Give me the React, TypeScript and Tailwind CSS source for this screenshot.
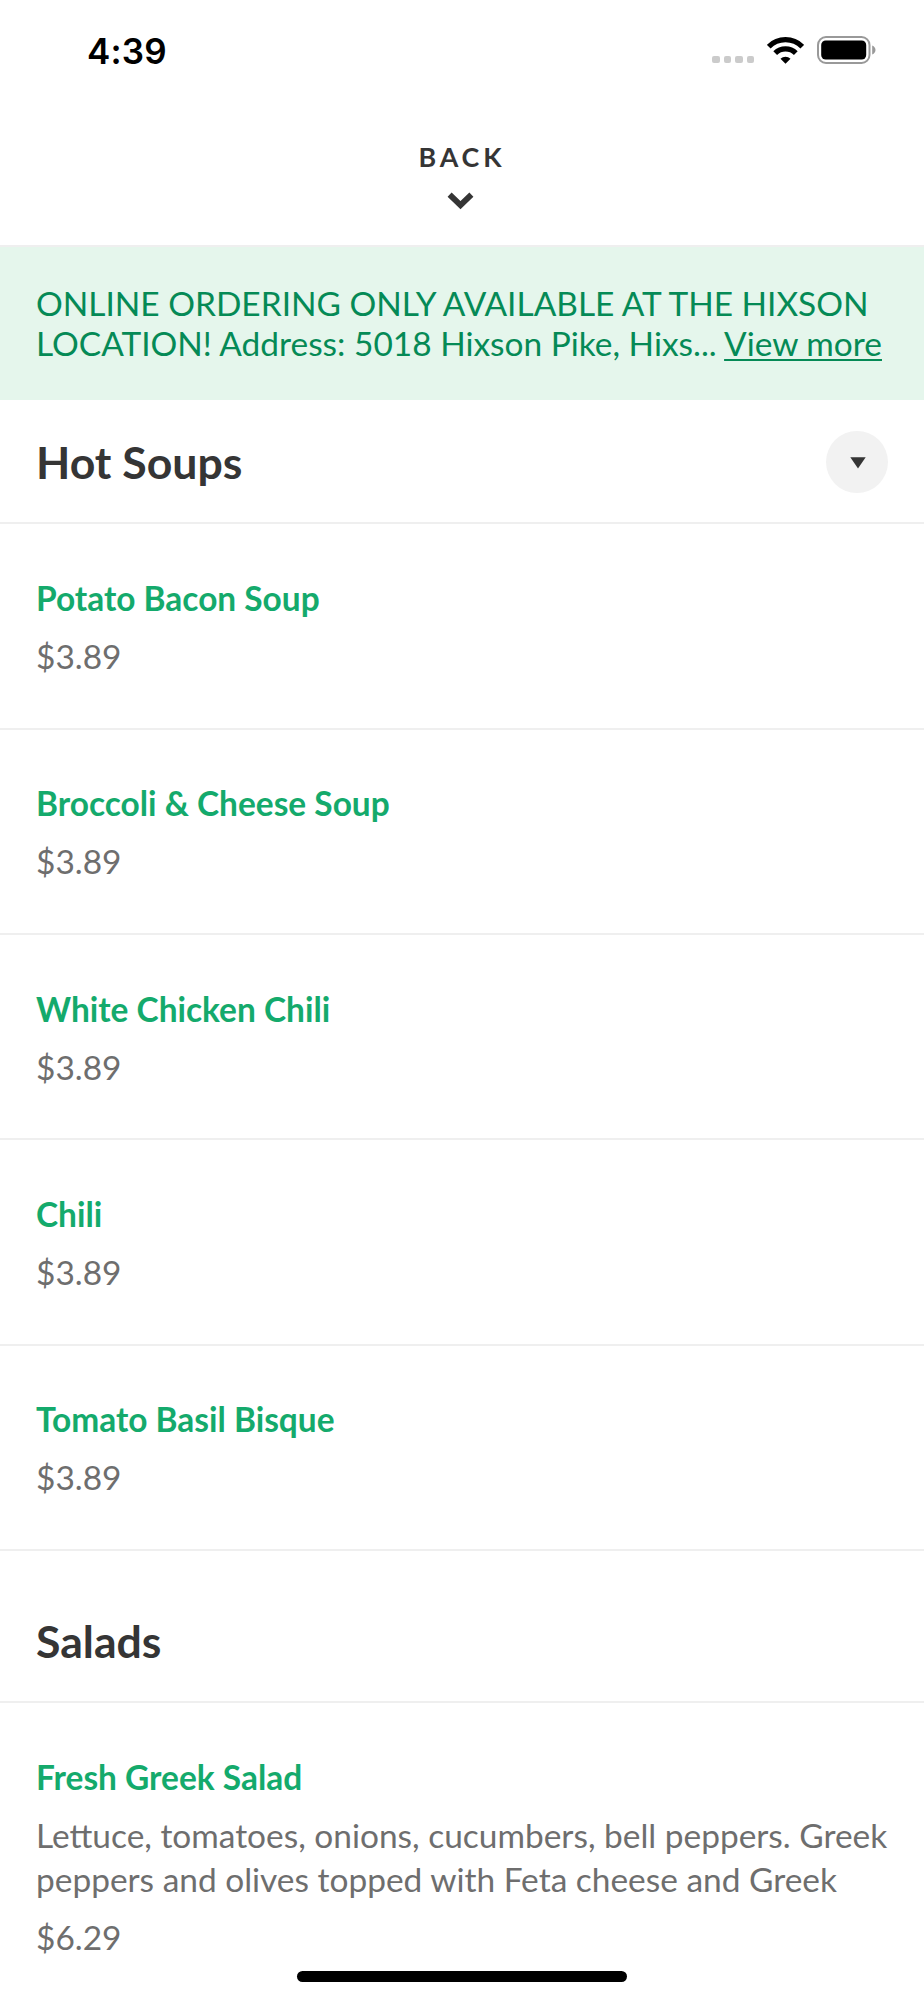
interface MenuItemProps {
  name: string;
  price: string;
  description?: string;
}

const soups: MenuItemProps[] = [
  { name: "Potato Bacon Soup", price: "$3.89" },
  { name: "Broccoli & Cheese Soup", price: "$3.89" },
  { name: "White Chicken Chili", price: "$3.89" },
  { name: "Chili", price: "$3.89" },
  { name: "Tomato Basil Bisque", price: "$3.89" },
];

const salads: MenuItemProps[] = [
  {
    name: "Fresh Greek Salad",
    price: "$6.29",
    description:
      "Lettuce, tomatoes, onions, cucumbers, bell peppers. Greek peppers and olives topped with Feta cheese and Greek",
  },
];

const StatusBar = () => (
  <div className="flex h-[100px] shrink-0 items-center justify-between pl-[87px] pr-[48px] text-black">
    <span className="pt-px font-['Inter',sans-serif] text-[35px] font-semibold leading-[44px] tracking-[0.2px]">
      4:39
    </span>
    <div className="flex items-center">
      {/* No cellular signal */}
      <div className="mr-[13px] mt-[19px] flex gap-[4px]">
        {[0, 1, 2, 3].map((dot) => (
          <span key={dot} className="h-[7.5px] w-[7.4px] rounded-[2px] bg-[#cbcbcb]" />
        ))}
      </div>
      {/* Wifi */}
      <svg width="37" height="27" viewBox="0 0 37 27" className="mr-[13px]">
        <g fill="none" stroke="currentColor" strokeWidth="5.3">
          <path d="M1.700 9.700a23.700 23.700 0 0 1 33.600 0" />
          <path d="M8.200 16.200a14.600 14.600 0 0 1 20.600 0" />
        </g>
        <path d="M18.500 26.800l-5-5a7.100 7.100 0 0 1 10 0z" fill="currentColor" />
      </svg>
      {/* Battery */}
      <svg width="59" height="28" viewBox="0 0 59 28">
        <rect x="1" y="1" width="51.500" height="26" rx="8" fill="none" stroke="#999" strokeWidth="2" />
        <rect x="4.200" y="4.400" width="45" height="19.200" rx="4.500" fill="currentColor" />
        <path d="M55.200 9.500c4.400 1.800 4.400 7.200 0 9z" fill="#999" />
      </svg>
    </div>
  </div>
);

const Header = () => (
  <header className="flex h-[147px] shrink-0 flex-col items-center border-b-2 border-[#efefef] pt-[41px] text-[#353535]">
    <button className="flex flex-col items-center">
      <span className="text-[26.8px] font-bold leading-[32px] tracking-[3.9px]">BACK</span>
      <svg width="27" height="18" viewBox="0 0 27 18" className="mr-[3px] mt-[19px]">
        <path d="M2.600 2.600l10.900 10.600 10.900-10.600" fill="none" stroke="currentColor" strokeWidth="5.8" />
      </svg>
    </button>
  </header>
);

const Notice = () => (
  <div className="h-[152.600px] shrink-0 bg-[#e5f6ec] px-9 pt-[36.200px] text-[33.45px] leading-[40.2px] text-[#058a56]">
    <p className="whitespace-nowrap">ONLINE ORDERING ONLY AVAILABLE AT THE HIXSON</p>
    <p className="whitespace-nowrap">
      LOCATION! Address: 5018 Hixson Pike, Hixs...{" "}
      <a className="underline decoration-2 underline-offset-[3px]">View more</a>
    </p>
  </div>
);

const SectionTitle = ({ title }: { title: string }) => (
  <h2 className="text-[44.6px] font-bold leading-[54px] text-[#353535]">{title}</h2>
);

const MenuItem = ({ name, price, description }: MenuItemProps) => (
  <li className="border-b-2 border-[#efefef] px-9 pb-[49.150px] pt-[51.600px] text-[33.45px] leading-[44.600px]">
    <h3 className="font-bold text-[#14aa6c]">{name}</h3>
    {description && <p className="-mr-2 mt-[13.400px] text-[#6e6e6e]">{description}</p>}
    <p className="mt-[13.400px] text-[#6e6e6e]">{price}</p>
  </li>
);

export default function App() {
  return (
    <div className="relative flex h-[2000px] w-[924px] flex-col overflow-hidden bg-white font-['Lato',sans-serif]">
      <StatusBar />
      <Header />
      <Notice />

      <div className="flex h-[124.800px] shrink-0 items-center justify-between border-b-2 border-[#efefef] px-9 pt-[2px]">
        <SectionTitle title="Hot Soups" />
        <button className="flex size-[62.500px] items-center justify-center rounded-full bg-[#f2f2f2]">
          <svg width="16" height="12" viewBox="0 0 16 12" className="ml-[2px] mt-[2px]">
            <path d="M0.300 0.300h15.400L8 11.600z" fill="#353535" />
          </svg>
        </button>
      </div>
      <ul className="shrink-0">
        {soups.map((soup) => (
          <MenuItem key={soup.name} {...soup} />
        ))}
      </ul>

      <div className="h-[152.200px] shrink-0 border-b-2 border-[#efefef] pl-9 pt-[63px]">
        <SectionTitle title="Salads" />
      </div>
      <ul className="shrink-0">
        {salads.map((salad) => (
          <MenuItem key={salad.name} {...salad} />
        ))}
      </ul>

      {/* Home indicator floats over the list */}
      <div className="absolute bottom-[18px] left-1/2 h-[11px] w-[330px] -translate-x-1/2 rounded-full bg-black" />
    </div>
  );
}
